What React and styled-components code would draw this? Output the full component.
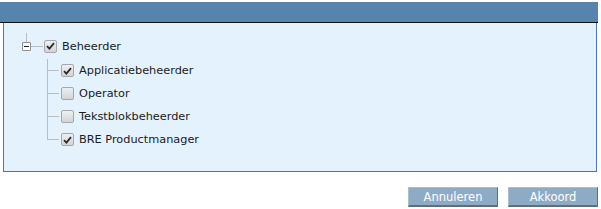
import styled, { createGlobalStyle } from 'styled-components';

const GlobalStyle = createGlobalStyle`
  body {
    margin: 0;
    background: #ffffff;
    font-family: "DejaVu Sans", Verdana, sans-serif;
  }
`;

const Dialog = styled.div`
  width: 598px;
  padding-top: 2px;
`;

const Header = styled.div`
  height: 20px;
  background: #5784ab;
  border-bottom: 1px solid #111;
`;

const Panel = styled.div`
  margin-left: 3px;
  margin-right: 1px;
  border: 1px solid #4a78aa;
  border-top: none;
  background: #e4f2fe;
  padding: 10px 0 20px 0;
`;

const Row = styled.div`
  display: flex;
  align-items: center;
  height: ${(p) => p.$h}px;
  padding-left: ${(p) => p.$indent}px;
  font-size: 11.3px;
  color: #1b1b1b;
`;

const ExpanderCell = styled.div`
  width: 9px;
  height: 26px;
  display: flex;
  flex-direction: column;
  align-items: center;
`;

const VLine = styled.div`
  width: 1px;
  height: ${(p) => p.$h}px;
  background: #b9bec4;
`;

const Expander = styled.div`
  width: 7px;
  height: 7px;
  border: 1px solid #8a8f95;
  border-radius: 1px;
  background: #fff;
  display: flex;
  align-items: center;
  justify-content: center;
  &::after {
    content: '';
    width: 5px;
    height: 1px;
    background: #222;
  }
`;

const HLine = styled.div`
  width: ${(p) => p.$w}px;
  height: 1px;
  background: #b9bec4;
`;

const Elbow = styled.div`
  width: 13px;
  align-self: stretch;
  background:
    linear-gradient(#b9bec4, #b9bec4) 0 0 / 1px ${(p) => (p.$last ? '12px' : '100%')} no-repeat,
    linear-gradient(#b9bec4, #b9bec4) 0 11px / 12px 1px no-repeat;
`;

const Box = styled.span`
  box-sizing: border-box;
  width: 13px;
  height: 13px;
  border: 1px solid #a4a8ad;
  border-radius: 2px;
  background: linear-gradient(#eeeff0, #d2d4d6);
  display: inline-flex;
  align-items: center;
  justify-content: center;
  margin-left: ${(p) => p.$ml || 0}px;
  margin-right: ${(p) => p.$mr}px;
`;

const Children = styled.div`
  display: flex;
  flex-direction: column;
`;

const Actions = styled.div`
  display: flex;
  justify-content: flex-end;
  gap: 10px;
  margin-top: 15px;
`;

const Button = styled.button`
  width: 90px;
  height: 20px;
  padding: 0;
  font-family: "DejaVu Sans", Verdana, sans-serif;
  font-size: 11.5px;
  color: #ffffff;
  background: #8eabc6;
  border: 1px solid #a9bfd4;
  border-right-color: #5f6e7c;
  border-bottom: 2px solid #5f6e7c;
  cursor: pointer;
`;

const Check = ({ checked, ml, mr }) => (
  <Box $ml={ml} $mr={mr}>
    {checked && (
      <svg width="9" height="8" viewBox="0 0 9 8">
        <path d="M1 4.2 L3.4 6.6 L8 1.2" fill="none" stroke="#2b2b2b" strokeWidth="1.8" />
      </svg>
    )}
  </Box>
);

const roles = [
  { name: 'Applicatiebeheerder', checked: true },
  { name: 'Operator', checked: false },
  { name: 'Tekstblokbeheerder', checked: false },
  { name: 'BRE Productmanager', checked: true },
];

const App = () => {
  return (
    <Dialog>
      <GlobalStyle />
      <Header />
      <Panel>
        <Row $h={26} $indent={18}>
          <ExpanderCell>
            <VLine $h={9} />
            <Expander />
          </ExpanderCell>
          <HLine $w={12} />
          <Check checked ml={1} mr={5} />
          <span>Beheerder</span>
        </Row>
        <Children>
          {roles.map((r, i) => (
            <Row key={r.name} $h={23} $indent={43}>
              <Elbow $last={i === roles.length - 1} />
              <Check checked={r.checked} ml={1} mr={5} />
              <span>{r.name}</span>
            </Row>
          ))}
        </Children>
      </Panel>
      <Actions>
        <Button>Annuleren</Button>
        <Button>Akkoord</Button>
      </Actions>
    </Dialog>
  );
};

export default App;
